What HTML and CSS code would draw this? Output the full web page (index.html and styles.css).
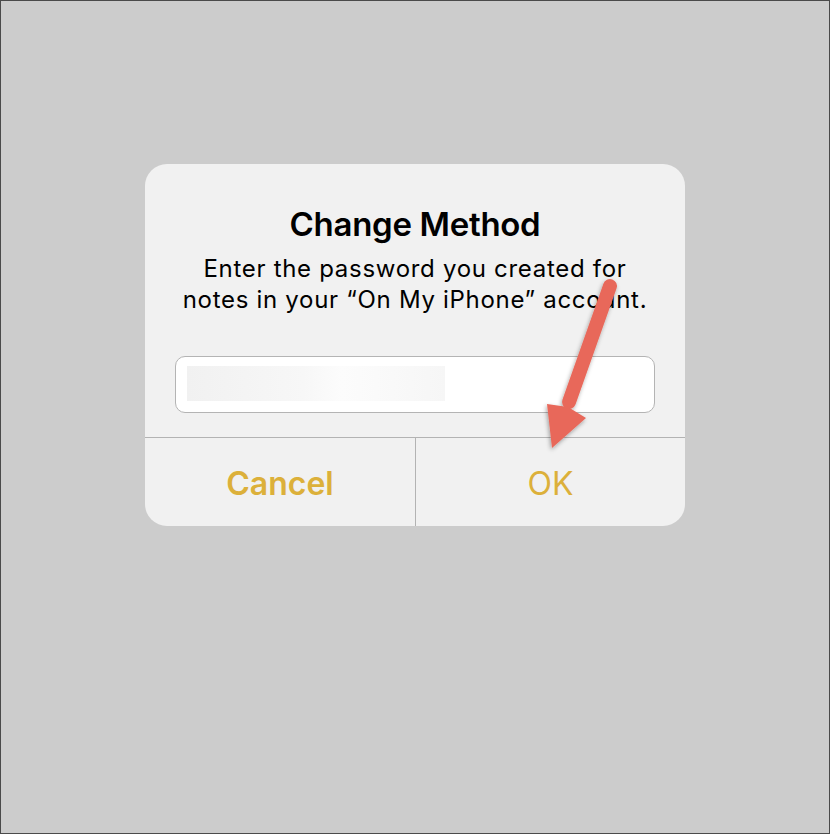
FILE: index.html
```html
<!DOCTYPE html>
<html lang="en">
<head>
    <meta charset="UTF-8">
    <meta name="viewport" content="width=device-width, initial-scale=1.0">
    <title>Change Method</title>
    <link rel="stylesheet" href="styles.css">
</head>
<body>

    <div class="screen">
        <div class="dialog">
            <div class="dialog-body">
                <h1 class="title">Change Method</h1>
                <p class="message">Enter the password you created for<br>notes in your “On My iPhone” account.</p>
                <div class="field">
                    <div class="field-redacted"></div>
                </div>
            </div>

            <div class="actions">
                <button class="action action-cancel">Cancel</button>
                <button class="action">OK</button>
            </div>

            <!-- Annotation arrow -->
            <svg class="arrow" viewBox="0 0 540 362" width="540" height="362">
                <defs>
                    <filter id="shadow" x="-50%" y="-50%" width="200%" height="200%">
                        <feDropShadow dx="-1" dy="2" stdDeviation="2" flood-color="#000" flood-opacity="0.35"/>
                    </filter>
                </defs>
                <g filter="url(#shadow)" fill="#E8685A">
                    <line x1="465" y1="122" x2="424" y2="238" stroke="#E8685A" stroke-width="14" stroke-linecap="round"/>
                    <polygon points="407,284 402,240 423,243 441,254"/>
                </g>
            </svg>
        </div>
    </div>

</body>
</html>
```

FILE: styles.css
```css
* {
    margin: 0;
    padding: 0;
    box-sizing: border-box;
    font-family: 'Inter', 'Noto Sans', sans-serif;
}

body {
    width: 830px;
    height: 834px;
    background: #cccccc;
    border: 1px solid #4a4a4a;
    overflow: hidden;
}

.screen {
    display: flex;
    justify-content: center;
    padding-top: 163px;
}

/* Alert */
.dialog {
    position: relative;
    width: 540px;
    background: #f1f1f1;
    border-radius: 22px;
}

.dialog-body {
    padding: 40px 30px 24px;
    text-align: center;
}

.title {
    font-size: 33px;
    font-weight: 600;
    color: #000;
    line-height: 40px;
    letter-spacing: -0.3px;
}

.message {
    font-size: 24px;
    line-height: 31px;
    letter-spacing: 0.7px;
    color: #000;
    margin-top: 9px;
}

.field {
    margin-top: 41px;
    height: 57px;
    background: #fff;
    border: 1px solid #b4b4b4;
    border-radius: 10px;
    padding: 9px 11px;
}

.field-redacted {
    width: 258px;
    height: 35px;
    background: linear-gradient(90deg, #f1f1f1, #f7f7f7 45%, #fcfcfc 60%, #f6f6f6);
}

/* Buttons */
.actions {
    display: grid;
    grid-template-columns: 270px 270px;
    border-top: 1px solid #b3b3b3;
}

.action {
    height: 88px;
    background: none;
    border: none;
    font-size: 32px;
    font-weight: 400;
    color: #dcb03a;
    padding-top: 2px;
}

.action + .action {
    border-left: 1px solid #b3b3b3;
}

.action-cancel {
    font-weight: 600;
}

.arrow {
    position: absolute;
    top: 0;
    left: 0;
    overflow: visible;
    pointer-events: none;
}
```
